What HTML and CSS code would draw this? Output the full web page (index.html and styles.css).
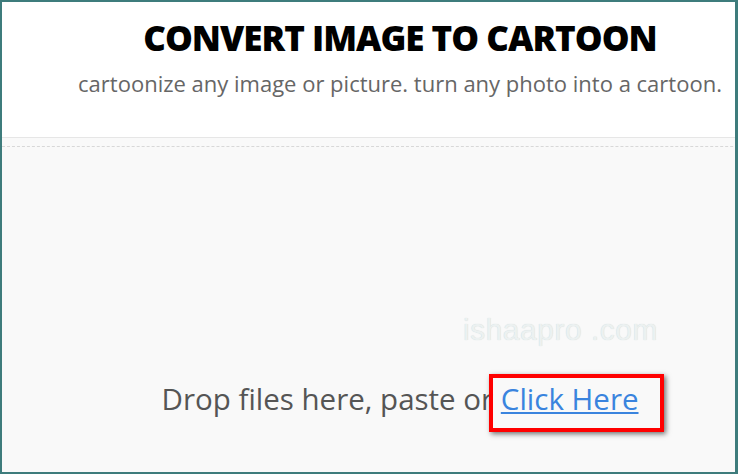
FILE: index.html
```html
<!DOCTYPE html>
<html lang="en">
<head>
  <meta charset="UTF-8">
  <meta name="viewport" content="width=device-width, initial-scale=1.0">
  <title>Convert image to cartoon</title>
  <link rel="stylesheet" href="styles.css">
</head>
<body>
  <div class="frame">
    <div class="page">
      <header class="head">
        <h1>CONVERT IMAGE TO CARTOON</h1>
        <p class="sub">cartoonize any image or picture. turn any photo into a cartoon.</p>
      </header>

      <div class="drop-wrap">
        <div class="dropzone">
          <div class="mark">ishaapro .com</div>
          <p class="drop-text">Drop files here, paste or <a href="#" class="pick">Click Here</a></p>
        </div>
      </div>
    </div>
  </div>
</body>
</html>
```

FILE: styles.css
```css
html, body {
  margin: 0;
  padding: 0;
}
body {
  font-family: "Open Sans", "Noto Sans", Arial, sans-serif;
  background: #fff;
}
.frame {
  width: 738px;
  height: 474px;
  box-sizing: border-box;
  border: 2px solid #3e7c7c;
  border-right-width: 3px;
  overflow: hidden;
}
.page {
  width: 796px;
  height: 100%;
  display: flex;
  flex-direction: column;
}
.head {
  height: 136px;
  flex: none;
  border-bottom: 1px solid #e6e6e6;
  text-align: center;
  padding-top: 12px;
  box-sizing: border-box;
}
.head h1 {
  margin: 0;
  font-size: 35px;
  font-weight: 800;
  letter-spacing: -1px;
  line-height: 48px;
  color: #000;
}
.sub {
  margin: 6px 0 0;
  font-size: 22px;
  color: #666;
}
.drop-wrap {
  flex: 1;
  background: #f9f9f9;
  padding-top: 8px;
}
.dropzone {
  position: relative;
  height: 100%;
  border-top: 1px dashed #d8d8d8;
  text-align: center;
  box-sizing: border-box;
  padding-top: 231px;
}
.mark {
  position: absolute;
  left: 461px;
  top: 168px;
  font-family: "Liberation Sans", Arial, sans-serif;
  font-size: 30px;
  line-height: 1;
  letter-spacing: 0.5px;
  color: #ecf1f1;
  text-shadow: 0 0 1px #c4d0d0, 0 0 2px #fff;
}
.drop-text {
  margin: 0;
  font-size: 29.5px;
  color: #555;
}
.pick {
  position: relative;
  color: #3a84de;
}
.pick::after {
  content: "";
  position: absolute;
  left: -12px;
  right: -25px;
  top: -4px;
  bottom: -13px;
  border: 4px solid #f00;
  box-shadow: 2px 2px 5px rgba(0, 0, 0, 0.55);
}
```
